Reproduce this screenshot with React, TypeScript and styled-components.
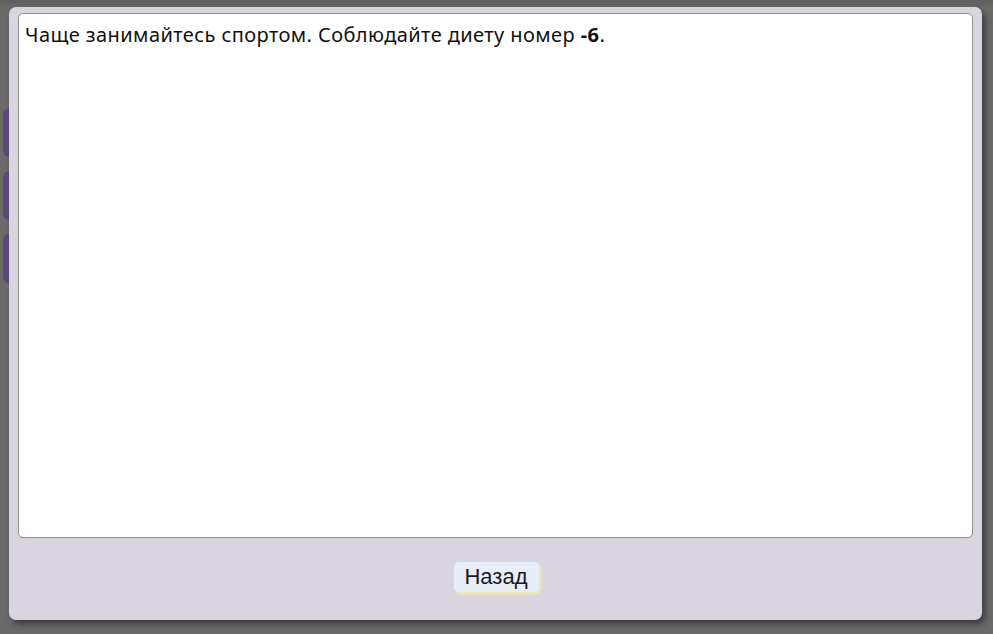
import React from "react";
import styled, { createGlobalStyle } from "styled-components";

const Global = createGlobalStyle`
  html, body { margin: 0; padding: 0; }
  body {
    background: #6a6a6a;
    width: 993px;
    height: 634px;
    overflow: hidden;
    font-family: "Noto Sans", sans-serif;
  }
`;

const Screen = styled.div`
  position: relative;
  width: 993px;
  height: 634px;
  box-sizing: border-box;
  padding: 7px 11px 14px 9px;
  display: flex;
  background: linear-gradient(#5e5e5e 0px, #6a6a6a 8px);
`;

const SideTab = styled.div<{ $top: number }>`
  position: absolute;
  left: 3px;
  top: ${(p) => p.$top}px;
  width: 12px;
  height: 49px;
  border-radius: 6px;
  background: #5b4a78;
`;

const Dialog = styled.div`
  position: relative;
  z-index: 1;
  flex: 1;
  display: flex;
  flex-direction: column;
  background: #dad4e0;
  border-radius: 7px;
  padding: 6px 9px 0 9px;
  box-shadow: 3px 4px 6px rgba(0, 0, 0, 0.45);
`;

const TextBox = styled.div`
  height: 525px;
  box-sizing: border-box;
  background: #fff;
  border: 1px solid #8f8f8f;
  border-radius: 5px;
  padding: 8px 6px;
  font-family: "Noto Sans", sans-serif;
  font-size: 20px;
  letter-spacing: 0.42px;
  line-height: 26px;
  color: #111;
`;

const Strong = styled.b`
  font-weight: 700;
`;

const Footer = styled.div`
  flex: 1;
  display: flex;
  justify-content: center;
  padding-top: 24px;
  padding-left: 1px;
`;

const BackButton = styled.button`
  width: 85px;
  height: 30px;
  border: none;
  border-radius: 5px;
  background: #e8eef8;
  box-shadow: 2px 2px 3px #f2eeaa;
  font-family: "Liberation Sans", Arial, sans-serif;
  font-size: 22px;
  color: #1a1a1a;
  padding: 0;
  line-height: 30px;
`;

export default function App() {
  return (
    <>
      <Global />
      <Screen>
        <SideTab $top={108} />
        <SideTab $top={171} />
        <SideTab $top={234} />
        <Dialog>
          <TextBox>
            Чаще занимайтесь спортом. Соблюдайте диету номер <Strong>-6</Strong>.
          </TextBox>
          <Footer>
            <BackButton>Назад</BackButton>
          </Footer>
        </Dialog>
      </Screen>
    </>
  );
}
